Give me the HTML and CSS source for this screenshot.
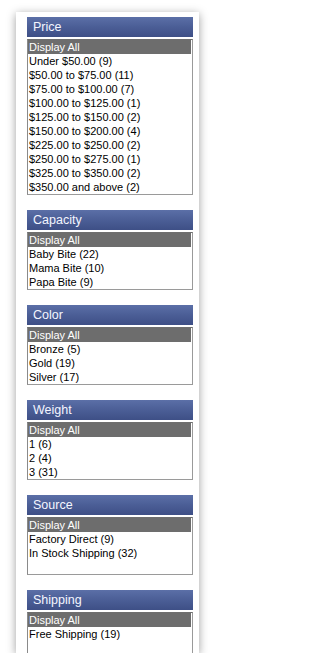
FILE: index.html
```html
<!DOCTYPE html>
<html>
<head>
<meta charset="utf-8">
<link rel="stylesheet" href="styles.css">
</head>
<body>
<div class="card">
  <section class="facet facet-tall">
    <h3 class="facet-title">Price</h3>
    <ul class="listbox">
      <li class="selected">Display All</li>
      <li>Under $50.00 (9)</li>
      <li>$50.00 to $75.00 (11)</li>
      <li>$75.00 to $100.00 (7)</li>
      <li>$100.00 to $125.00 (1)</li>
      <li>$125.00 to $150.00 (2)</li>
      <li>$150.00 to $200.00 (4)</li>
      <li>$225.00 to $250.00 (2)</li>
      <li>$250.00 to $275.00 (1)</li>
      <li>$325.00 to $350.00 (2)</li>
      <li>$350.00 and above (2)</li>
    </ul>
  </section>
  <section class="facet">
    <h3 class="facet-title">Capacity</h3>
    <ul class="listbox">
      <li class="selected">Display All</li>
      <li>Baby Bite (22)</li>
      <li>Mama Bite (10)</li>
      <li>Papa Bite (9)</li>
    </ul>
  </section>
  <section class="facet">
    <h3 class="facet-title">Color</h3>
    <ul class="listbox">
      <li class="selected">Display All</li>
      <li>Bronze (5)</li>
      <li>Gold (19)</li>
      <li>Silver (17)</li>
    </ul>
  </section>
  <section class="facet">
    <h3 class="facet-title">Weight</h3>
    <ul class="listbox">
      <li class="selected">Display All</li>
      <li>1 (6)</li>
      <li>2 (4)</li>
      <li>3 (31)</li>
    </ul>
  </section>
  <section class="facet">
    <h3 class="facet-title">Source</h3>
    <ul class="listbox">
      <li class="selected">Display All</li>
      <li>Factory Direct (9)</li>
      <li>In Stock Shipping (32)</li>
    </ul>
  </section>
  <section class="facet">
    <h3 class="facet-title">Shipping</h3>
    <ul class="listbox">
      <li class="selected">Display All</li>
      <li>Free Shipping (19)</li>
    </ul>
  </section>
</div>
</body>
</html>
```
FILE: styles.css
```css
html, body {
  margin: 0;
  padding: 0;
  background: #ffffff;
}
body {
  padding: 12px 0 0 16px;
  font-family: "Liberation Sans", Arial, sans-serif;
}
.card {
  width: 183px;
  height: 641px;
  box-sizing: border-box;
  padding: 5px 6px 0 11px;
  background: #ffffff;
  box-shadow: 0 2px 9px rgba(0, 0, 0, 0.38);
  overflow: hidden;
  display: flex;
  flex-direction: column;
  gap: 15px;
}
.facet {
  display: flex;
  flex-direction: column;
  gap: 2px;
}
.facet-title {
  margin: 0;
  height: 20px;
  line-height: 20px;
  padding-left: 6px;
  font-size: 12.5px;
  font-weight: normal;
  color: #f4f6ff;
  background: linear-gradient(to bottom, #5b6fa7 0%, #4b5e96 50%, #3e4f86 100%);
}
.listbox {
  list-style: none;
  margin: 0;
  padding: 0 1px 0 0;
  height: 56px;
  border: 1px solid #9a9a9a;
  border-top-color: #6f6f6f;
  border-left-color: #8a8a8a;
  font-size: 11px;
  color: #000000;
  overflow: hidden;
}
.facet-tall .listbox {
  height: 154px;
}
.listbox li {
  height: 14px;
  line-height: 14px;
  padding-left: 1px;
  white-space: nowrap;
}
.listbox li.selected {
  background: #6d6d6d;
  color: #ffffff;
}
```
